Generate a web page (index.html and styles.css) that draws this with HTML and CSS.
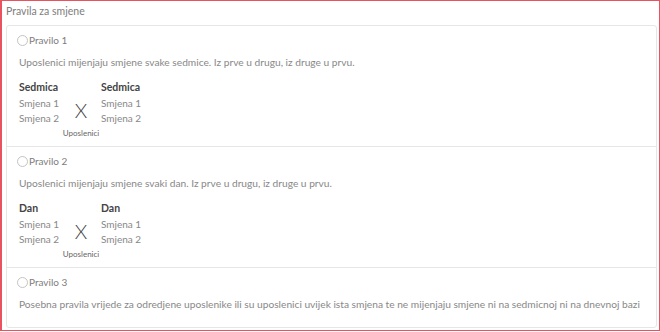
FILE: index.html
```html
<!DOCTYPE html>
<html lang="bs">
<head>
    <meta charset="UTF-8">
    <meta name="viewport" content="width=device-width, initial-scale=1.0">
    <title>Pravila za smjene</title>
    <link rel="stylesheet" href="styles.css">
</head>
<body>
    <div class="panel">
        <div class="panel-title">Pravila za smjene</div>

        <div class="rules">
            <div class="rule">
                <label class="rule-label"><span class="radio"></span>Pravilo 1</label>
                <p class="rule-desc">Uposlenici mijenjaju smjene svake sedmice. Iz prve u drugu, iz druge u prvu.</p>
                <div class="swap">
                    <div class="swap-col">
                        <div class="swap-head">Sedmica</div>
                        <div>Smjena 1</div>
                        <div>Smjena 2</div>
                    </div>
                    <div class="swap-mid">
                        <div class="swap-x">X</div>
                        <div class="swap-note">Uposlenici</div>
                    </div>
                    <div class="swap-col">
                        <div class="swap-head">Sedmica</div>
                        <div>Smjena 1</div>
                        <div>Smjena 2</div>
                    </div>
                </div>
            </div>

            <div class="rule">
                <label class="rule-label"><span class="radio"></span>Pravilo 2</label>
                <p class="rule-desc">Uposlenici mijenjaju smjene svaki dan. Iz prve u drugu, iz druge u prvu.</p>
                <div class="swap">
                    <div class="swap-col">
                        <div class="swap-head">Dan</div>
                        <div>Smjena 1</div>
                        <div>Smjena 2</div>
                    </div>
                    <div class="swap-mid">
                        <div class="swap-x">X</div>
                        <div class="swap-note">Uposlenici</div>
                    </div>
                    <div class="swap-col">
                        <div class="swap-head">Dan</div>
                        <div>Smjena 1</div>
                        <div>Smjena 2</div>
                    </div>
                </div>
            </div>

            <div class="rule rule-last">
                <label class="rule-label"><span class="radio"></span>Pravilo 3</label>
                <p class="rule-desc">Posebna pravila vrijede za odredjene uposlenike ili su uposlenici uvijek ista smjena te ne mijenjaju smjene ni na sedmicnoj ni na dnevnoj bazi</p>
            </div>
        </div>
    </div>
</body>
</html>
```

FILE: styles.css
```css
body {
    margin: 0;
    font-family: Lato, "Open Sans", Arial, sans-serif;
    color: #888;
    background: #fff;
}

.panel {
    width: 653px;
    height: 329px;
    border: 1px solid #e8535f;
    border-left-width: 2px;
    border-right-width: 2px;
    padding: 0 0 0 4px;
}

.panel-title {
    height: 24px;
    line-height: 20px;
    font-size: 10.5px;
    color: #7d7d7d;
}

.rules {
    border: 1px solid #e6e6e6;
    border-radius: 3px;
    height: 301px;
    margin-right: 2px;
}

.rule {
    height: 120px;
    border-bottom: 1px solid #e6e6e6;
    padding: 0 12px;
}

.rule-last {
    border-bottom: none;
    height: auto;
}

.rule-label {
    display: flex;
    align-items: center;
    height: 28px;
    font-size: 10px;
    color: #7d7d7d;
    margin-left: -2px;
}

.radio {
    width: 9px;
    height: 9px;
    border: 1px solid #c4c4c4;
    border-radius: 50%;
    margin-right: 1px;
}

.rule-desc {
    margin: 0;
    height: 26px;
    line-height: 16px;
    font-size: 10.2px;
    white-space: nowrap;
}

.swap {
    display: flex;
    font-size: 10px;
    line-height: 15.7px;
}

.swap-col {
    display: flex;
    flex-direction: column;
}

.swap-col:first-child {
    width: 56px;
}

.swap-head {
    font-weight: 700;
    font-size: 10.5px;
    color: #444;
}

.swap-mid {
    width: 12px;
    margin-right: 14px;
    display: flex;
    flex-direction: column;
    align-items: center;
    padding-top: 19px;
}

.swap-x {
    font-size: 20px;
    font-weight: 300;
    line-height: 22px;
    color: #444;
}

.swap-note {
    margin-top: 6px;
    font-size: 8px;
    line-height: 12px;
    color: #666;
    white-space: nowrap;
}
```
